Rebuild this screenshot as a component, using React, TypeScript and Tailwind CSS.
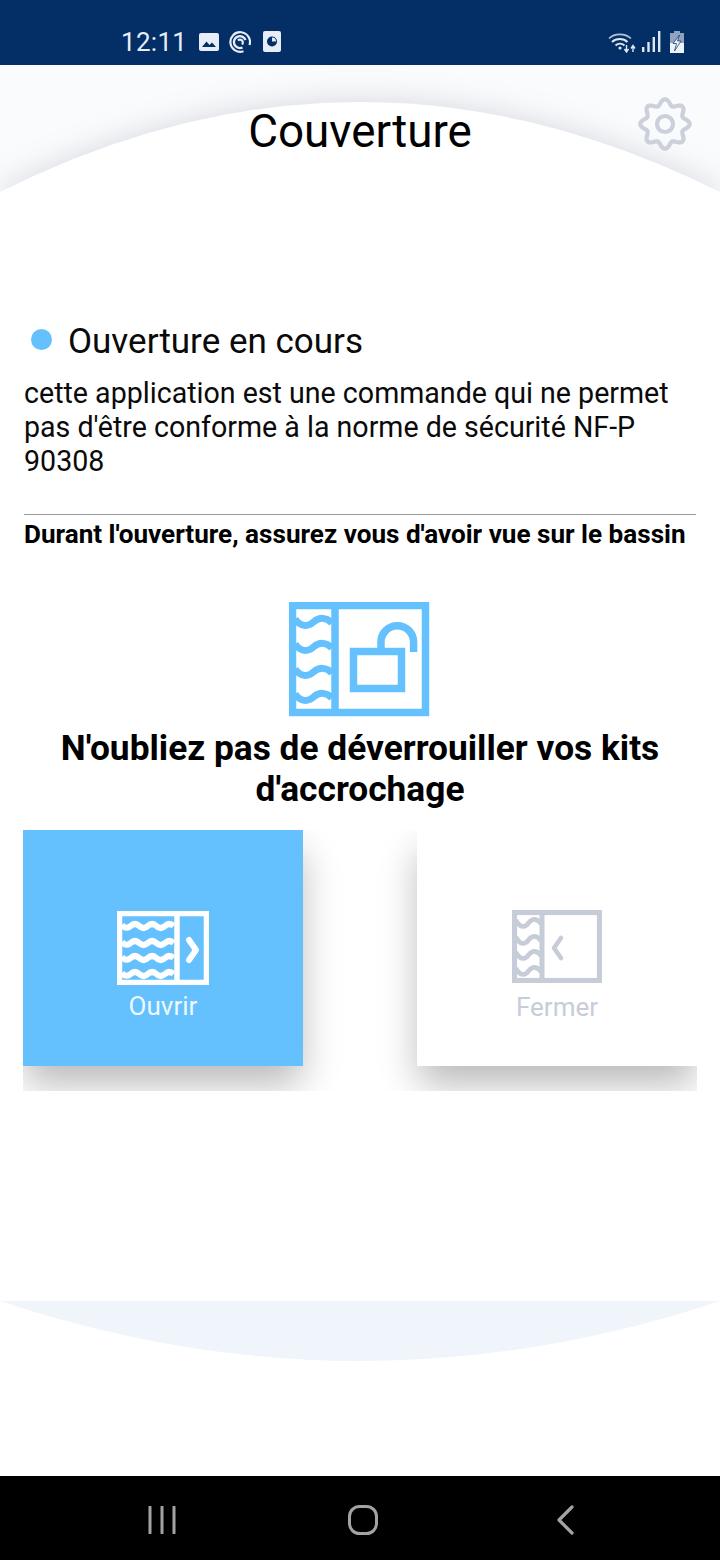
const roboto = "font-['Roboto',sans-serif]";

// Eight-lobed gear outline, sampled from a cosine-modulated radius.
function gearOutline(cx: number, cy: number, base: number, lobe: number) {
  const pts: string[] = [];
  for (let i = 0; i < 240; i++) {
    const t = (i / 240) * Math.PI * 2;
    const r = base + lobe * Math.cos(8 * t);
    pts.push(`${(cx + r * Math.sin(t)).toFixed(2)} ${(cy - r * Math.cos(t)).toFixed(2)}`);
  }
  return `M${pts.join("L")}Z`;
}

function GearIcon() {
  return (
    <svg width="56" height="56" viewBox="0 0 56 56" className="absolute left-[637px] top-[31px]">
      <path d={gearOutline(28, 28, 21.8, 2.9)} fill="none" stroke="#cbd0da" strokeWidth="4.2" />
      <circle cx="28" cy="28" r="8" fill="none" stroke="#cbd0da" strokeWidth="4.2" />
    </svg>
  );
}

// Wavy lines for the cover icons; each sits on a given row of the pool area.
function PoolWave({ x, y, w, stroke, width }: { x: number; y: number; w: number; stroke: string; width: number }) {
  const s = w / 2;
  return (
    <path
      d={`M${x} ${y - 3} C${x + s * 0.3} ${y + 5} ${x + s * 0.7} ${y + 5} ${x + s} ${y} S${x + s * 1.7} ${y - 5} ${x + w} ${y + 1}`}
      fill="none"
      stroke={stroke}
      strokeWidth={width}
    />
  );
}

function LockCoverIcon() {
  const c = "#64c1fd";
  return (
    <svg width="141" height="115" viewBox="0 0 141 115" className="block">
      <rect x="3.5" y="3.5" width="133" height="107" fill="none" stroke={c} strokeWidth="7.5" />
      <path d="M46 3V111" stroke={c} strokeWidth="7.5" />
      {[20, 45, 70, 95].map((y) => (
        <PoolWave key={y} x={6} y={y} w={37} stroke={c} width={7} />
      ))}
      <rect x="64.5" y="49.5" width="48" height="37" fill="none" stroke={c} strokeWidth="7.5" />
      <path d="M92 47V40A16.3 16.3 0 0 1 124.6 40V50" fill="none" stroke={c} strokeWidth="7.5" />
    </svg>
  );
}

function OpenCoverIcon() {
  return (
    <svg width="92" height="74" viewBox="0 0 92 74" className="block">
      <rect x="2.5" y="2.5" width="87" height="69" fill="none" stroke="#fff" strokeWidth="5.5" />
      <path d="M60 2V72" stroke="#fff" strokeWidth="5.5" />
      {[14, 31, 46, 62].map((y) => (
        <path
          key={y}
          d={`M5 ${y} q4.3 5 8.6 1 t8.6 0 t8.6 0 t8.6 0 t8.6 0 t8.6 0`}
          fill="none"
          stroke="#fff"
          strokeWidth="6"
        />
      ))}
      <path d="M72 29L79 39L72 49" fill="none" stroke="#fff" strokeWidth="6" strokeLinecap="round" strokeLinejoin="round" />
    </svg>
  );
}

function CloseCoverIcon() {
  const c = "#c7ccd9";
  return (
    <svg width="90" height="73" viewBox="0 0 90 73" className="block">
      <rect x="2.5" y="2.5" width="85" height="68" fill="none" stroke={c} strokeWidth="5.2" />
      <path d="M30 2V71" stroke={c} strokeWidth="5" />
      {[13, 30, 45, 61].map((y) => (
        <PoolWave key={y} x={4} y={y} w={25} stroke={c} width={4.6} />
      ))}
      <path d="M49 28L42 38L49 48" fill="none" stroke={c} strokeWidth="4.6" strokeLinecap="round" strokeLinejoin="round" />
    </svg>
  );
}

function StatusLeftIcons() {
  const c = "#e6edf6";
  return (
    <div className="flex items-center">
      <svg width="20" height="20" viewBox="0 0 20 20" className="ml-[12px]">
        <rect y="1" width="20" height="18" rx="2" fill={c} />
        <path d="M3 15L7.5 9.5L10.5 13L13 10.5L17 15Z" fill="#042e66" />
      </svg>
      <svg width="22" height="22" viewBox="0 0 22 22" className="ml-[10px]">
        <path d="M20.5 14A9.8 9.8 0 1 0 14.5 20.2" fill="none" stroke={c} strokeWidth="2.2" />
        <path d="M16.5 9A6 6 0 1 0 13.5 16.5" fill="none" stroke={c} strokeWidth="2.4" />
        <path d="M9 9.5A2.8 2.8 0 1 1 13 13.5" fill="none" stroke={c} strokeWidth="2.2" />
      </svg>
      <svg width="18" height="21" viewBox="0 0 18 21" className="ml-[12px]">
        <rect width="18" height="21" rx="2" fill={c} />
        <circle cx="9" cy="10.5" r="5" fill="#042e66" />
        <path d="M9 10.5V6.5A4 4 0 0 1 13 10.5Z" fill={c} />
      </svg>
    </div>
  );
}

function StatusRightIcons() {
  const c = "#dfe7f2";
  return (
    <div className="flex items-center">
      <svg width="28" height="22" viewBox="0 0 28 22">
        <path d="M1 7.5C6.5 2 17 2 23 7.5" fill="none" stroke="#b5c4d9" strokeWidth="1.6" />
        <path d="M4 11C8 7 15.5 7 19.5 11" fill="none" stroke={c} strokeWidth="1.8" />
        <path d="M7.5 14.5C10 12 14 12 16.5 14.5" fill="none" stroke={c} strokeWidth="1.8" />
        <circle cx="12" cy="17" r="1.6" fill={c} />
        <path d="M18.5 14V20M16.5 18L18.5 21L20.5 18" fill="none" stroke={c} strokeWidth="1.4" />
        <path d="M25 21V15M23 17.5L25 14.5L27 17.5" fill="none" stroke={c} strokeWidth="1.4" />
      </svg>
      <svg width="19" height="21" viewBox="0 0 19 21" className="ml-[6px]">
        <rect x="0" y="16" width="2.4" height="5" fill={c} />
        <rect x="5.3" y="11" width="2.4" height="10" fill={c} />
        <rect x="10.6" y="6" width="2.4" height="15" fill={c} />
        <rect x="16" y="0" width="2.4" height="21" fill={c} />
      </svg>
      <svg width="14" height="22" viewBox="0 0 14 22" className="ml-[9px]">
        <rect x="4" y="0" width="6" height="3" fill="#8fa3bf" />
        <rect x="0" y="2" width="14" height="20" fill="#8fa3bf" />
        <rect x="0" y="12" width="14" height="10" fill="#eef3f9" />
        <path d="M9.5 4L3 12.5H6.5L4.5 20L11 10H7.5Z" fill="#eef3f9" stroke="#042e66" strokeWidth="0.7" />
      </svg>
    </div>
  );
}

function ActionCard({ label, active }: { label: string; active?: boolean }) {
  return (
    <button
      className={`w-[280px] h-[236px] pt-[36px] flex flex-col items-center justify-center shadow-[0_20px_36px_-2px_rgba(0,0,0,0.28)] ${
        active ? "bg-[#64c1fd] text-[#eef8ff]" : "bg-white text-[#c7ccd9]"
      }`}
    >
      {active ? <OpenCoverIcon /> : <CloseCoverIcon />}
      <span className={`${roboto} text-[26px] leading-[30px] ${active ? "mt-[6px]" : "mt-[9px]"}`}>{label}</span>
    </button>
  );
}

export default function App() {
  return (
    <div className={`${roboto} relative w-[720px] h-[1560px] flex flex-col bg-white overflow-hidden`}>
      {/* Status bar */}
      <div className="h-[65px] shrink-0 bg-[#042e66] flex items-center pl-[121px] pr-[36px] pt-[18px]">
        <span className="text-[26px] leading-[30px] text-[#e6edf6] tracking-[0.3px]">12:11</span>
        <StatusLeftIcons />
        <div className="ml-auto">
          <StatusRightIcons />
        </div>
      </div>

      <main className="relative flex-1 flex flex-col">
        {/* Curved header backdrop */}
        <svg width="720" height="140" viewBox="0 0 720 140" className="absolute left-0 top-0">
          <rect width="720" height="140" fill="#fafbfc" />
          <path
            d="M-2 128Q360 -54 722 128V140H-2Z"
            fill="#fff"
            className="drop-shadow-[0_-3px_14px_rgba(90,100,130,0.2)]"
          />
        </svg>

        {/* Curved footer backdrop */}
        <svg width="720" height="62" viewBox="0 0 720 62" className="absolute left-0 top-[1236px]">
          <path d="M0 0H720Q360 120 0 0Z" fill="#eff5fa" />
        </svg>

        <div className="relative flex flex-col">
          <header className="h-[112px] pt-[38px] flex justify-center">
            <h1 className="text-[45.8px] leading-[58px] text-black font-normal">Couverture</h1>
            <GearIcon />
          </header>

          <div className="mt-[143px] pl-[31px] flex items-start h-[40px]">
            <span className="mt-[9px] w-[21px] h-[21px] rounded-full bg-[#64c1fd]" />
            <span className="mt-[1px] ml-[16px] text-[35px] leading-[42px] text-[#0a0a0a]">Ouverture en cours</span>
          </div>

          <p className="mt-[16px] px-[24px] text-[28.6px] leading-[34px] text-[#0a0a0a]">
            cette application est une commande qui ne permet pas d'être conforme à la norme de sécurité NF-P 90308
          </p>

          <div className="mx-[24px] mt-[36px] h-[1px] bg-[#999999]" />

          <p className="mt-[2px] px-[24px] text-[26.1px] leading-[34px] font-bold text-black whitespace-nowrap">
            Durant l'ouverture, assurez vous d'avoir vue sur le bassin
          </p>

          <div className="mt-[51px] flex justify-center pr-[1px]">
            <LockCoverIcon />
          </div>

          <h2 className="mt-[11px] px-[40px] text-center text-[35.3px] leading-[41px] font-bold text-black">
            N'oubliez pas de déverrouiller vos kits d'accrochage
          </h2>

          {/* Action cards; their shadows are clipped by this row */}
          <div className="mt-[20px] mx-[23px] h-[261px] flex justify-between overflow-hidden">
            <ActionCard label="Ouvrir" active />
            <ActionCard label="Fermer" />
          </div>
        </div>
      </main>

      {/* Navigation bar */}
      <nav className="h-[84px] shrink-0 bg-black flex items-center pl-[148px] pt-[4px]">
        <svg width="28" height="28" viewBox="0 0 28 28">
          <path d="M2 1V27M14 1V27M26 1V27" stroke="#a3a3a3" strokeWidth="3" strokeLinecap="round" />
        </svg>
        <svg width="30" height="30" viewBox="0 0 30 30" className="ml-[172px]">
          <rect x="1.5" y="1.5" width="27" height="27" rx="10" fill="none" stroke="#a3a3a3" strokeWidth="3" />
        </svg>
        <svg width="18" height="30" viewBox="0 0 18 30" className="ml-[178px]">
          <path d="M16 2L3 15L16 28" fill="none" stroke="#a3a3a3" strokeWidth="3.2" strokeLinecap="round" strokeLinejoin="round" />
        </svg>
      </nav>
    </div>
  );
}
